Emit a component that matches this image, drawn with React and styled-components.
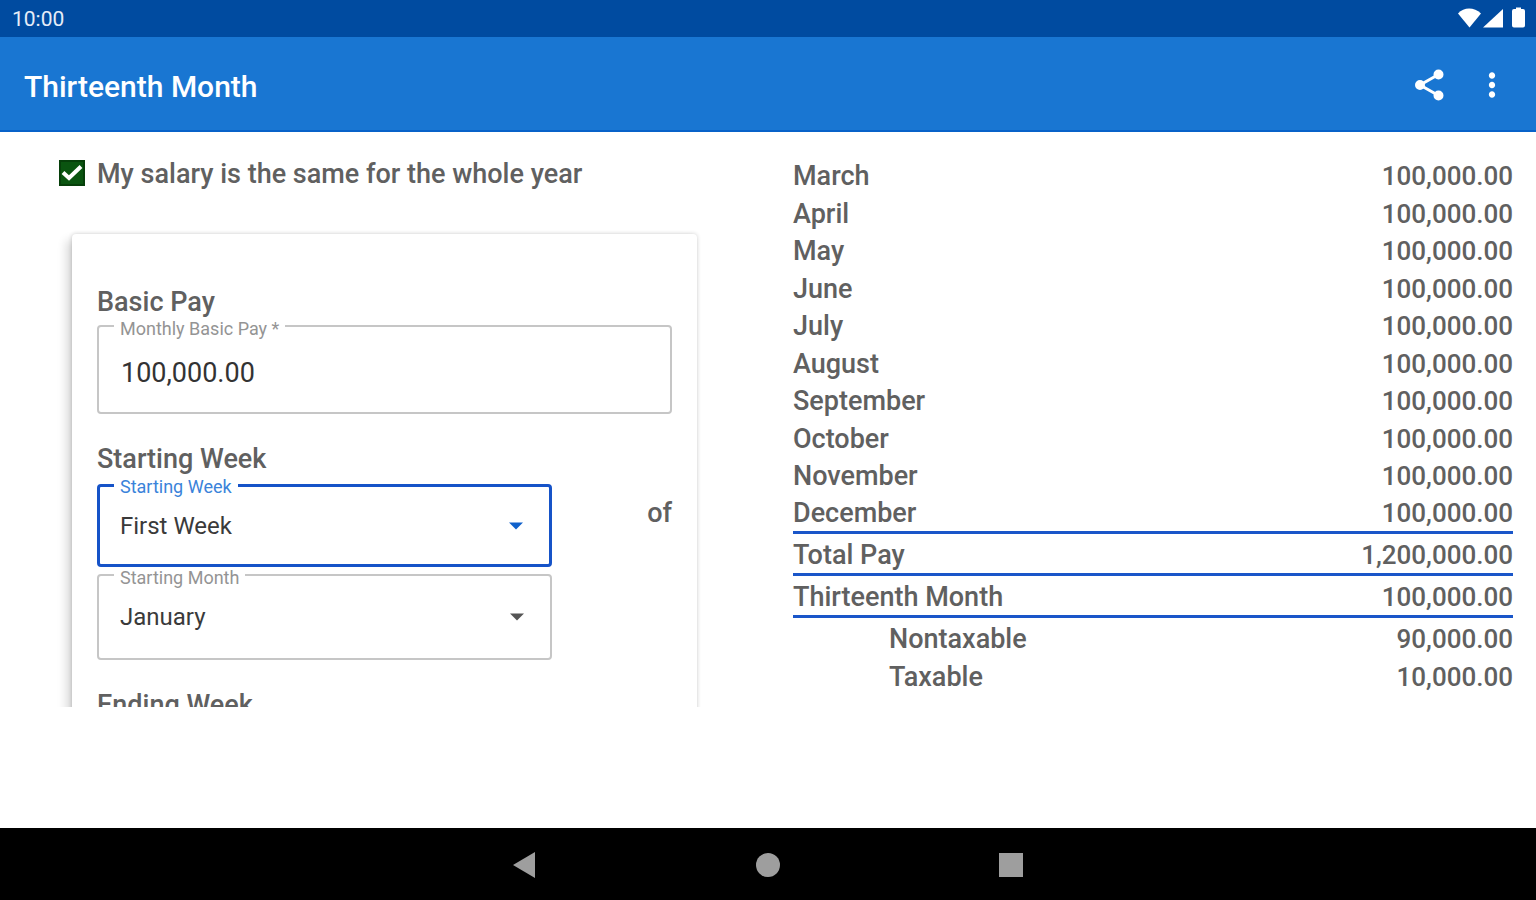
import { useState } from 'react';

import styled, { createGlobalStyle } from 'styled-components';
import { MdShare, MdMoreVert } from 'react-icons/md';


const GlobalStyle = createGlobalStyle`
    * {
        box-sizing: border-box;
    }
    body {
        margin: 0;
        background: #fff;
        font-family: Roboto, "Noto Sans", sans-serif;
        color: #606060;
    }
    button, input, select {
        font-family: inherit;
    }
`
const Screen = styled.div`
    display: flex;
    flex-direction: column;
    height: 100vh;
`
const StatusBar = styled.div`
    display: flex;
    align-items: center;
    justify-content: space-between;
    height: 37px;
    padding: 0 8px 0 12px;
    background: #004ba0;
    color: #e6edf8;
    font-size: 21px;
`
const AppBar = styled.header`
    display: flex;
    align-items: center;
    height: 95px;
    padding: 2px 20px 0 24px;
    background: #1976d2;
    border-bottom: 2px solid #0862c9;
`
const Title = styled.h1`
    flex: 1;
    margin: 0;
    padding-top: 4px;
    font-size: 30px;
    font-weight: 500;
    color: #fff;
`
const IconButton = styled.button`
    display: flex;
    align-items: center;
    justify-content: center;
    width: 48px;
    height: 48px;
    margin-left: 14px;
    padding: 0;
    border: none;
    background: transparent;
    color: #fff;
    cursor: pointer;
`
const Content = styled.main`
    flex: 1;
    display: grid;
    grid-template-columns: 1fr 1fr;
    min-height: 0;
    padding-bottom: 121px;
`
const Pane = styled.section`
    overflow: hidden;
    padding-top: 24px;
`
const CheckRow = styled.label`
    display: flex;
    align-items: center;
    gap: 12px;
    height: 36px;
    padding-left: 59px;
    font-size: 27px;
    font-weight: 500;
`
const CheckMark = styled.span`
    display: flex;
    position: relative;
    width: 26px;
    height: 26px;
    margin-bottom: 2px;
    background: ${(prop) => prop.$on ? '#0a5410' : '#fff'};
    border: 2px solid #063f0a;
`
const HiddenCheck = styled.input`
    position: absolute;
    inset: 0;
    width: 100%;
    height: 100%;
    margin: 0;
    opacity: 0;
`
const Card = styled.div`
    margin: 42px 71px 0 72px;
    padding: 49px 25px;
    background: #fff;
    border-radius: 4px;
    box-shadow: 0 0 4px rgba(0, 0, 0, .2), -6px 6px 10px rgba(0, 0, 0, .14);
`
const Heading = styled.h2`
    margin: 0;
    font-size: 27px;
    font-weight: 500;
    line-height: 38px;
`
const Row = styled.div`
    display: flex;
    align-items: flex-start;
    margin-bottom: 26px;
`
const Fields = styled.div`
    flex: 1;
    display: flex;
    flex-direction: column;
    gap: 7px;
`
const Of = styled.span`
    width: 120px;
    padding-top: 16px;
    font-size: 27px;
    font-weight: 500;
    line-height: 38px;
    text-align: right;
`
const FieldBox = styled.div`
    position: relative;
    flex: 1;
    display: flex;
    align-items: center;
    margin-top: 4px;
    border: ${(prop) => prop.$active ? '3px solid #1653c8' : '2px solid #c6c6c6'};
    border-radius: 4px;
    color: ${(prop) => prop.$active ? '#1061cb' : '#555'};

    ${Fields} & {
        margin-top: 0;
    }
    ${Fields} &:first-child {
        margin-top: 6px;
    }
`
const FieldLabel = styled.label`
    position: absolute;
    top: ${(prop) => prop.$active ? '-10px' : '-8px'};
    left: ${(prop) => prop.$active ? '14px' : '15px'};
    padding: 0 6px;
    background: #fff;
    color: ${(prop) => prop.$active ? '#3a83da' : '#949494'};
    font-size: 18px;
    line-height: 20px;
`
const Input = styled.input`
    width: 100%;
    height: 85px;
    padding: 6px 22px 0;
    border: none;
    outline: none;
    background: transparent;
    color: #333;
    font-size: 27px;
`
const Select = styled.select`
    width: 100%;
    height: ${(prop) => prop.$active ? '77px' : '82px'};
    padding: 0 ${(prop) => prop.$active ? '20px' : '21px'};
    appearance: none;
    border: none;
    outline: none;
    background: transparent;
    color: #3a3a3a;
    font-size: 24px;
`
const Caret = styled.svg`
    position: absolute;
    right: 26px;
    pointer-events: none;
`
const Table = styled.table`
    width: calc(100% - 48px);
    margin: 1px 0 0 25px;
    border-spacing: 0;
`
const Line = styled.tr`
    height: ${(prop) => prop.$total ? '42px' : '37px'};

    &:nth-child(even) {
        height: ${(prop) => prop.$total ? '42px' : '38px'};
    }
    th, td {
        padding: ${(prop) => prop.$spaced ? '4px' : '2px'} 0 0;
        border-bottom: ${(prop) => prop.$ruled ? '3px solid #1a56c9' : 'none'};
        font-weight: 500;
        line-height: 35px;
    }
    th {
        padding-left: ${(prop) => prop.$indent ? '96px' : '0'};
        font-size: 27px;
        text-align: left;
    }
    td {
        font-size: 26px;
        text-align: right;
    }
`
const NavBar = styled.nav`
    display: flex;
    align-items: center;
    justify-content: center;
    gap: 195px;
    height: 72px;
    padding-top: 1px;
    background: #000;
`
const NavButton = styled(IconButton)`
    margin: 0;
    color: #9e9e9e;
`

const weeks = ['First Week', 'Second Week', 'Third Week', 'Fourth Week'];
const months = [
    'January', 'February', 'March', 'April', 'May', 'June', 'July',
    'August', 'September', 'October', 'November', 'December',
];

const lines = [
    ...months.slice(2).map((label) => ({ label, amount: '100,000.00', ruled: label === 'December' })),
    { label: 'Total Pay', amount: '1,200,000.00', ruled: true, total: true, spaced: true },
    { label: 'Thirteenth Month', amount: '100,000.00', ruled: true, total: true, spaced: true },
    { label: 'Nontaxable', amount: '90,000.00', indent: true, spaced: true },
    { label: 'Taxable', amount: '10,000.00', indent: true },
];

const StatusIcons = () => (
    <svg width="72" height="24" viewBox="0 0 72 24" fill="#fff" aria-hidden="true">
        <path d="M2 6.5C8-.2 18-.2 25 6.5L13.500 20.500Z" />
        <path d="M27 20.500L47 2V20.500Z" />
        <path d="M58 2H60V.5H65V2H67Q69 2 69 4V18.500Q69 20.500 67 20.500H58Q56 20.500 56 18.500V4Q56 2 58 2Z" />
    </svg>
)

const ShareIcon = () => (
    <svg width="32" height="32" viewBox="0 0 32 32" fill="#fff" stroke="#fff" strokeWidth="3">
        <path d="M24.500 5.500L6 16L24.500 26.500" fill="none" />
        <circle cx="24.500" cy="5.500" r="3.500" />
        <circle cx="6" cy="16" r="3.500" />
        <circle cx="24.500" cy="26.500" r="3.500" />
    </svg>
)

const SelectField = ({ id, label, options, value, onChange, active }) => (
    <FieldBox $active={active}>
        <FieldLabel htmlFor={id} $active={active}>{label}</FieldLabel>
        <Select id={id} value={value} $active={active} onChange={(e) => { onChange(e.target.value) }}>
            {options.map((option) => <option key={option}>{option}</option>)}
        </Select>
        <Caret width="14" height="8" viewBox="0 0 14 8" fill="currentColor">
            <path d="M0 .5H14L7 7.500Z" />
        </Caret>
    </FieldBox>
)

export default function App() {
    const [same, setSame] = useState(true);
    const [pay, setPay] = useState('100,000.00');
    const [week, setWeek] = useState('First Week');
    const [month, setMonth] = useState('January');

    return (
        <Screen>
            <GlobalStyle />
            <StatusBar>
                <span>10:00</span>
                <StatusIcons />
            </StatusBar>
            <AppBar>
                <Title>Thirteenth Month</Title>
                <IconButton aria-label="Share"><ShareIcon /></IconButton>
                <IconButton aria-label="More options"><MdMoreVert size={38} /></IconButton>
            </AppBar>
            <Content>
                <Pane>
                    <CheckRow>
                        <CheckMark $on={same}>
                            <HiddenCheck type="checkbox" checked={same} onChange={() => { setSame(!same) }} />
                            {same && (
                                <svg width="22" height="22" viewBox="0 0 22 22" fill="none" stroke="#fff" strokeWidth="4">
                                    <path d="M2 10.500L8 16L20 4.500" />
                                </svg>
                            )}
                        </CheckMark>
                        My salary is the same for the whole year
                    </CheckRow>
                    <Card>
                        <Heading>Basic Pay</Heading>
                        <Row>
                            <FieldBox>
                                <FieldLabel htmlFor="pay">Monthly Basic Pay *</FieldLabel>
                                <Input id="pay" value={pay} onChange={(e) => { setPay(e.target.value) }} />
                            </FieldBox>
                        </Row>
                        <Heading>Starting Week</Heading>
                        <Row>
                            <Fields>
                                <SelectField id="week" label="Starting Week" options={weeks} value={week} onChange={setWeek} active />
                                <SelectField id="month" label="Starting Month" options={months} value={month} onChange={setMonth} />
                            </Fields>
                            <Of>of</Of>
                        </Row>
                        <Heading>Ending Week</Heading>
                    </Card>
                </Pane>
                <Pane>
                    <Table>
                        <tbody>
                            {lines.map((line) => (
                                <Line key={line.label} $ruled={line.ruled} $total={line.total} $spaced={line.spaced} $indent={line.indent}>
                                    <th scope="row">{line.label}</th>
                                    <td>{line.amount}</td>
                                </Line>
                            ))}
                        </tbody>
                    </Table>
                </Pane>
            </Content>
            <NavBar>
                <NavButton aria-label="Back">
                    <svg width="24" height="26" viewBox="0 0 24 26" fill="currentColor"><path d="M0 13L22 0V26Z" /></svg>
                </NavButton>
                <NavButton aria-label="Home">
                    <svg width="24" height="24" viewBox="0 0 24 24" fill="currentColor"><circle cx="12" cy="12" r="12" /></svg>
                </NavButton>
                <NavButton aria-label="Recent apps">
                    <svg width="24" height="24" viewBox="0 0 24 24" fill="currentColor"><rect width="24" height="24" /></svg>
                </NavButton>
            </NavBar>
        </Screen>
    )
}
